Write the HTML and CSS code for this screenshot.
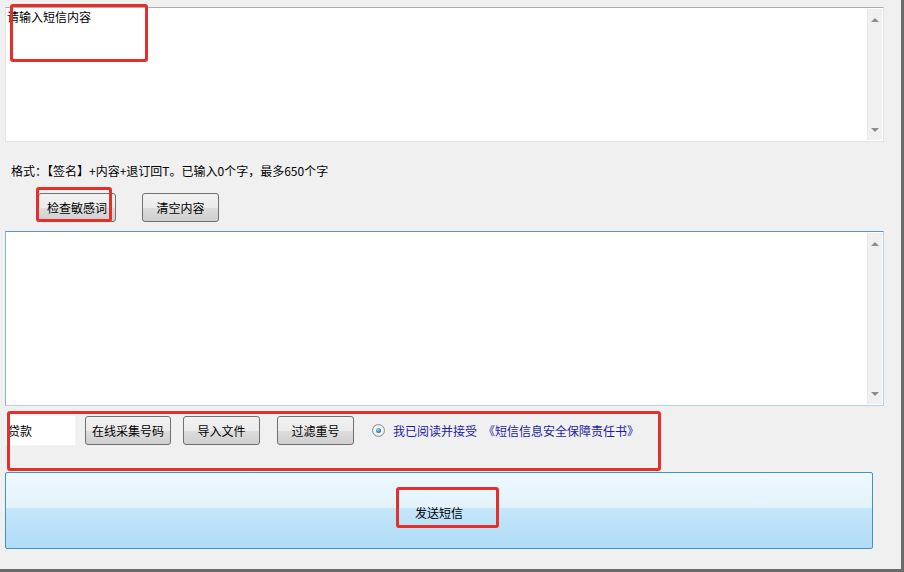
FILE: index.html
```html
<!DOCTYPE html>
<html lang="zh-CN">
  <head>
    <meta charset="UTF-8" />
    <title>发送短信</title>
    <link rel="stylesheet" href="styles.css">
  </head>
  <body>
    <div class="window">
      <div class="memo memo-content">
        <textarea placeholder="请输入短信内容"></textarea>
        <div class="scroll"><span class="arrow-up"></span><span class="arrow-down"></span></div>
      </div>

      <p class="format">格式：【签名】+内容+退订回T。已输入0个字，最多650个字</p>

      <div class="tools">
        <button class="btn btn-check">检查敏感词</button>
        <button class="btn btn-clear">清空内容</button>
      </div>

      <div class="memo memo-numbers">
        <textarea></textarea>
        <div class="scroll"><span class="arrow-up"></span><span class="arrow-down"></span></div>
      </div>

      <div class="numbers-row">
        <input class="keyword" type="text" value="贷款" />
        <button class="btn btn-collect">在线采集号码</button>
        <button class="btn btn-import">导入文件</button>
        <button class="btn btn-filter">过滤重号</button>
        <label class="agree">
          <span class="radio"></span>
          我已阅读并接受<span class="doc">《短信信息安全保障责任书》</span>
        </label>
      </div>

      <button class="send">发送短信</button>

      <!-- red annotation boxes -->
      <div class="mark mark-a"></div>
      <div class="mark mark-b"></div>
      <div class="mark mark-c"></div>
      <div class="mark mark-d"></div>
    </div>
  </body>
</html>
```

FILE: styles.css
```css
/* General */
body {
  margin: 0;
  background-color: #f0f0f0;
  font: 12px "Noto Sans CJK SC", "Liberation Sans", sans-serif;
  color: #000;
}

.window {
  position: relative;
  width: 896px;
  height: 562px;
  padding: 7px 0 0 5px;
  border-right: 3px solid #6b6b6b;
  border-bottom: 3px solid #6b6b6b;
}

/* Text boxes */
.memo {
  display: flex;
  width: 879px;
  box-sizing: border-box;
  background-color: #fff;
  border: 1px solid #e2e3ea;
  border-top-color: #abadb3;
}

.memo-content {
  height: 135px;
}

.memo-numbers {
  height: 175px;
  margin-top: 9px;
  border-color: #b9d3ea;
  border-top-color: #5f93c6;
  border-left-color: #8fb4d8;
}

.memo textarea {
  flex: 1;
  border: 0;
  outline: none;
  resize: none;
  padding: 1px 1px;
  margin: 0;
  font: inherit;
  line-height: 16px;
  background: transparent;
  color: #000;
}

.memo textarea::placeholder {
  color: #000;
  opacity: 1;
}

.scroll {
  width: 15px;
  margin: 1px 1px 1px 0;
  background-color: #f0f0f0;
  border-left: 1px solid #e8e8e8;
  display: flex;
  flex-direction: column;
  justify-content: space-between;
  align-items: center;
  padding: 9px 0 8px;
  box-sizing: border-box;
}

.arrow-up,
.arrow-down {
  width: 0;
  height: 0;
  border-left: 4px solid transparent;
  border-right: 4px solid transparent;
}

.arrow-up {
  border-bottom: 4px solid #8c8c8c;
}

.arrow-down {
  border-top: 4px solid #8c8c8c;
}

/* Format hint */
.format {
  margin: 21px 0 0 6px;
  line-height: 16px;
}

/* Buttons */
.btn {
  height: 29px;
  box-sizing: border-box;
  padding: 0;
  border: 1px solid #707070;
  border-radius: 3px;
  background: linear-gradient(#f2f2f2 0%, #ebebeb 50%, #dddddd 51%, #cfcfcf 100%);
  font: inherit;
  color: #000;
}

.tools {
  display: flex;
  margin-top: 14px;
  padding-left: 33px;
}

.btn-check {
  width: 78px;
}

.btn-clear {
  width: 77px;
  margin-left: 26px;
}

/* Numbers row */
.numbers-row {
  display: flex;
  align-items: center;
  height: 31px;
  margin-top: 9px;
}

.keyword {
  width: 71px;
  height: 31px;
  box-sizing: border-box;
  margin: 0;
  padding: 0 2px;
  border: 1px solid #f4f4f4;
  background-color: #fff;
  font: inherit;
  outline: none;
}

.btn-collect {
  width: 86px;
  margin-left: 9px;
}

.btn-import {
  width: 77px;
  margin-left: 12px;
}

.btn-filter {
  width: 77px;
  margin-left: 17px;
}

.agree {
  display: flex;
  align-items: center;
  margin-left: 18px;
  color: #1c1ca6;
}

.doc {
  margin-left: 6px;
}

.radio {
  display: inline-flex;
  justify-content: center;
  align-items: center;
  width: 13px;
  height: 13px;
  box-sizing: border-box;
  margin-right: 8px;
  border: 1px solid #8e8f8f;
  border-radius: 50%;
  background: radial-gradient(circle at 50% 50%, #ffffff 30%, #d4d4d4 100%);
}

.radio::after {
  content: "";
  width: 5px;
  height: 5px;
  border-radius: 50%;
  background: radial-gradient(circle at 40% 35%, #a9defc, #2a7fb8 60%, #0d4f84);
}

/* Send button */
.send {
  display: block;
  width: 868px;
  height: 77px;
  margin-top: 26px;
  padding: 3px 0 0;
  box-sizing: border-box;
  border: 1px solid #3c94c8;
  border-radius: 2px;
  background: linear-gradient(#eef8fe 0%, #e3f3fc 46%, #c4e6fa 47%, #b0dcf6 100%);
  font: inherit;
  color: #000;
}

/* Red annotation boxes */
.mark {
  position: absolute;
  box-sizing: border-box;
  border: 3px solid #e52f2a;
  border-radius: 3px;
  pointer-events: none;
}

.mark-a {
  left: 10px;
  top: 4px;
  width: 138px;
  height: 58px;
}

.mark-b {
  left: 36px;
  top: 187px;
  width: 76px;
  height: 35px;
}

.mark-c {
  left: 7px;
  top: 411px;
  width: 654px;
  height: 60px;
}

.mark-d {
  left: 396px;
  top: 487px;
  width: 103px;
  height: 41px;
}
```
